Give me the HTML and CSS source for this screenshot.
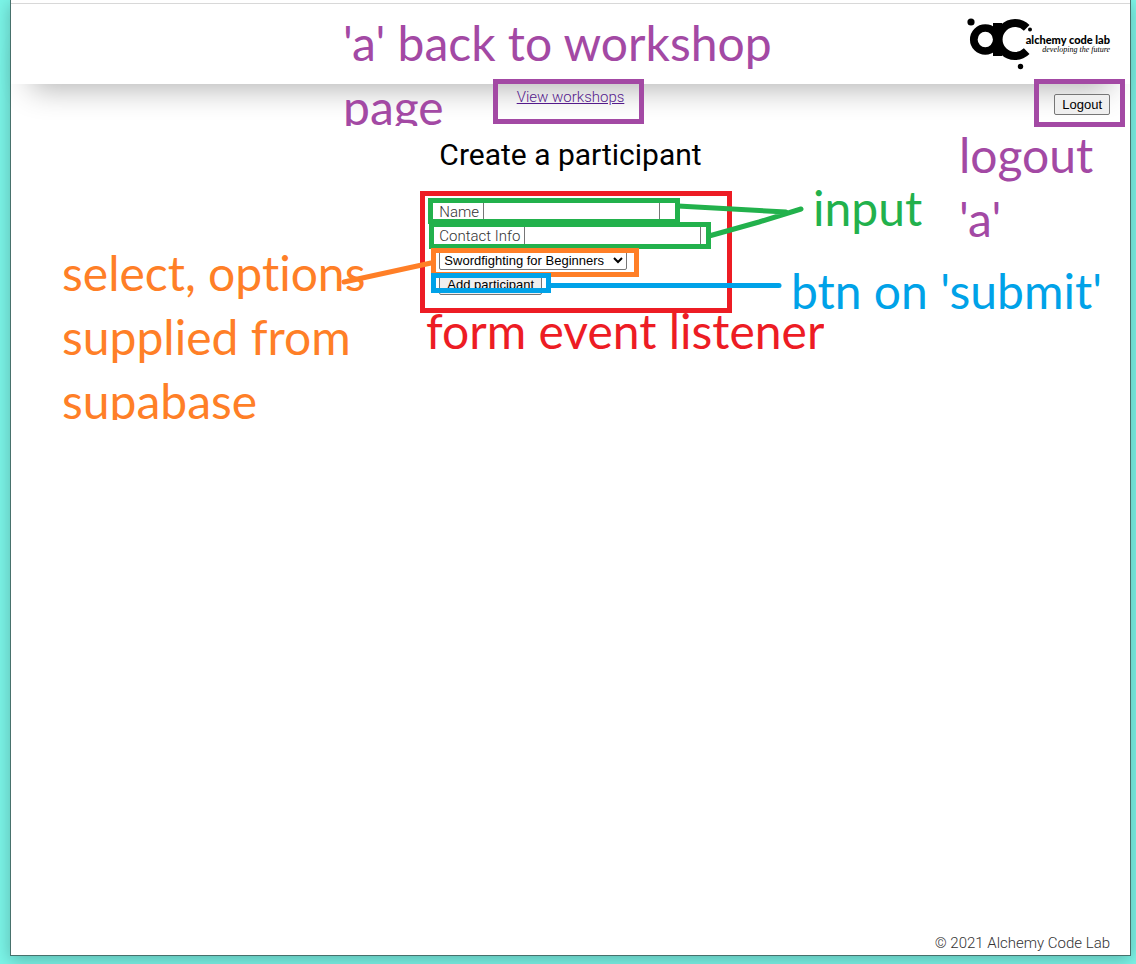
FILE: index.html
```html
<!DOCTYPE html>
<html lang="en">
<head>
<meta charset="utf-8">
<meta name="viewport" content="width=device-width, initial-scale=1">
<title>Create a participant</title>
<link rel="stylesheet" href="styles.css">
</head>
<body>
<div class="window">
  <header class="header">
    <div class="logo">
      <svg class="logo-mark" width="66" height="54" viewBox="0 0 66 54" aria-hidden="true">
        <circle cx="5" cy="6" r="3.600"/>
        <circle cx="64" cy="13.500" r="2"/>
        <circle cx="54.500" cy="50.500" r="2.700"/>
        <circle cx="19.300" cy="23.500" r="11.500" fill="none" stroke="#000" stroke-width="7.700"/>
        <path d="M27 7h9v7q-4 9 0 18v8h-9z"/>
        <path d="M60.700 11.800A16.500 16.500 0 1 0 60.700 35.200" fill="none" stroke="#000" stroke-width="8"/>
      </svg>
      <div class="logo-text">
        <span class="logo-name">alchemy code lab</span>
        <span class="logo-tag">developing the future</span>
      </div>
    </div>
  </header>
  <main class="main">
    <nav class="nav">
      <a class="nav-link" href="#workshops">View workshops</a>
      <button class="button logout" type="button">Logout</button>
    </nav>
    <section class="content">
      <h1 class="title">Create a participant</h1>
      <form class="form">
        <label class="row">Name <input class="input" type="text" name="name"></label>
        <label class="row">Contact Info <input class="input" type="text" name="contact"></label>
        <div class="row">
          <select class="select" name="workshop" aria-label="Workshop">
            <option>Swordfighting for Beginners</option>
          </select>
        </div>
        <div class="row"><button class="button" type="submit">Add participant</button></div>
      </form>
    </section>
  </main>
  <footer class="footer">© 2021 Alchemy Code Lab</footer>
</div>

<div class="notes">
  <svg class="marks" width="1136" height="420" viewBox="0 0 1136 420" aria-hidden="true">
    <g fill="none" stroke-width="5">
      <rect x="495.500" y="81.500" width="146" height="40" stroke="#a349a4"/>
      <rect x="1036.500" y="81.500" width="86" height="43" stroke="#a349a4"/>
      <rect x="422.500" y="193.500" width="307" height="117" stroke="#ed1c24"/>
      <rect x="430.500" y="200.500" width="247" height="21" stroke="#22b14c"/>
      <rect x="431.500" y="224.500" width="277" height="22" stroke="#22b14c"/>
      <rect x="433.500" y="250.500" width="203" height="24" stroke="#ff7f27"/>
      <rect x="433.500" y="275.500" width="115" height="15" stroke="#00a2e8"/>
      <path d="M678 206l108 6M709 236l50-14 42-13" stroke="#22b14c" stroke-linecap="round"/>
      <path d="M550 285.500h229" stroke="#00a2e8" stroke-linecap="round"/>
    </g>
  </svg>
  <p class="note note-link">'a' back to workshop page</p>
  <p class="note note-logout">logout 'a'</p>
  <p class="note note-input">input</p>
  <p class="note note-submit">btn on 'submit'</p>
  <p class="note note-form">form event listener</p>
  <p class="note note-select">select, options supplied from supabase</p>
  <svg class="marks" width="1136" height="420" viewBox="0 0 1136 420" aria-hidden="true">
    <path d="M344 282l87-19" fill="none" stroke="#ff7f27" stroke-width="5" stroke-linecap="round"/>
  </svg>
</div>
</body>
</html>
```
FILE: styles.css
```css
* {
  box-sizing: border-box;
}

body {
  position: relative;
  display: flex;
  min-height: 100vh;
  margin: 0;
  padding: 0 5px 8px 10px;
  background: #7bf5e8;
  color: #333;
  font: 300 15px/24px Roboto, sans-serif;
}

.window {
  display: flex;
  flex: 1;
  flex-direction: column;
  padding-top: 3px;
  border: 1px solid #47716c;
  border-top: 0;
  background: #fff;
  box-shadow: 0 4px 16px rgba(0, 0, 0, 0.25);
}

.header {
  display: flex;
  justify-content: flex-end;
  padding: 12px 20px 14px;
  border-top: 1px solid #d8d8d8;
  box-shadow: 0 25px 30px -20px rgba(0, 0, 0, 0.3);
}

.logo {
  display: flex;
  color: #000;
}

.logo-mark {
  display: block;
}

.logo-text {
  display: flex;
  flex-direction: column;
  align-items: flex-end;
  margin-left: -6px;
  padding-top: 18px;
}

.logo-name {
  font: 900 11px/12px Lato, sans-serif;
}

.logo-tag {
  font: italic 8px/8px "Liberation Serif", serif;
}

.main {
  flex: 1;
}

.nav {
  display: grid;
  grid-template-columns: 1fr auto 1fr;
  padding: 1px 20px 0;
}

.nav-link {
  grid-column: 2;
  color: #551a8b;
}

.logout {
  justify-self: end;
  margin-top: 9px;
}

.content {
  width: fit-content;
  margin: 20px auto 0;
}

.title {
  margin: 0 0 25px;
  color: #000;
  font-size: 30px;
  font-weight: 400;
  line-height: 40px;
}

.row {
  display: flex;
  align-items: center;
  gap: 4px;
  height: 24px;
}

.input {
  width: 177px;
  height: 21px;
  padding: 1px 2px;
  border: 1px solid #767676;
  font: 13px "Liberation Sans", sans-serif;
}

.select {
  width: 188px;
  height: 20px;
  border: 1px solid #767676;
  border-radius: 2px;
  background: #fff;
  color: #000;
  font: 13px "Liberation Sans", sans-serif;
}

.button {
  height: 21px;
  padding: 1px 7px;
  border: 1px solid #767676;
  border-radius: 2px;
  background: #efefef;
  color: #000;
  font: 13px "Liberation Sans", sans-serif;
}

.footer {
  padding: 0 20px;
  text-align: right;
}

.notes {
  position: absolute;
  inset: 0;
  overflow: hidden;
  pointer-events: none;
}

.marks {
  position: absolute;
  top: 0;
  left: 0;
}

.note {
  position: absolute;
  margin: 0;
  overflow: hidden;
  font: 400 48px/64px Lato, sans-serif;
  font-variant-ligatures: none;
}

.note-link {
  top: 11px;
  left: 343px;
  width: 460px;
  height: 115px;
  color: #a349a4;
}

.note-logout {
  top: 123px;
  left: 959px;
  width: 160px;
  color: #a349a4;
}

.note-input {
  top: 176px;
  left: 813px;
  color: #22b14c;
}

.note-submit {
  top: 259px;
  left: 791px;
  color: #00a2e8;
}

.note-form {
  top: 299px;
  left: 426px;
  color: #ed1c24;
}

.note-select {
  top: 241px;
  left: 62px;
  width: 340px;
  height: 179px;
  color: #ff7f27;
}
```
